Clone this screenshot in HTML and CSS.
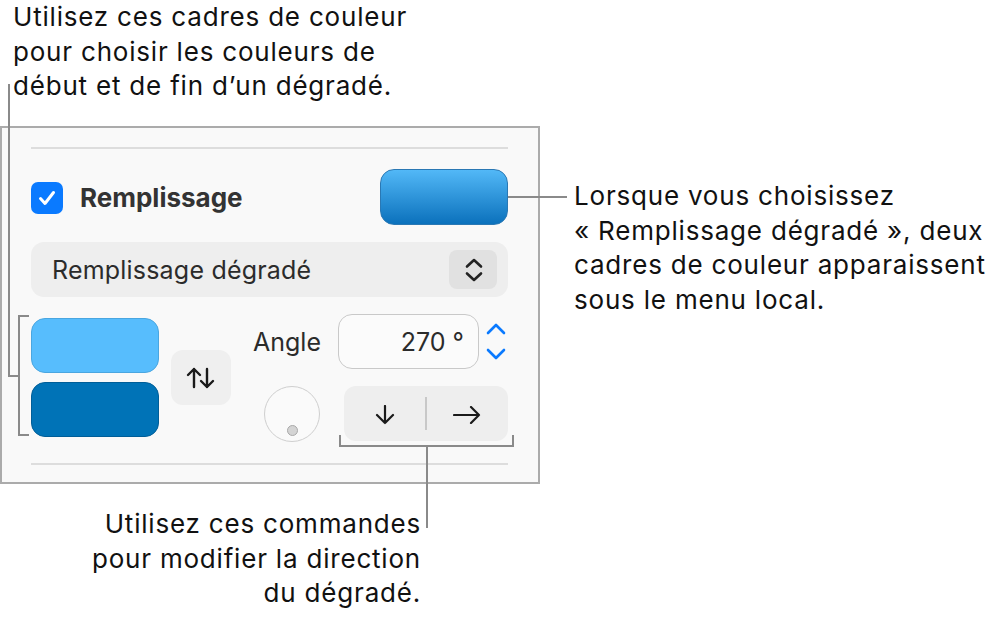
FILE: index.html
```html
<!DOCTYPE html>
<html lang="fr">
<head>
<meta charset="utf-8">
<link rel="stylesheet" href="styles.css">
</head>
<body>
<div class="canvas">
  <p class="note note-top">Utilisez ces cadres de couleur<br>pour choisir les couleurs de<br>début et de fin d’un dégradé.</p>
  <p class="note note-right">Lorsque vous choisissez<br>« Remplissage dégradé », deux<br>cadres de couleur apparaissent<br>sous le menu local.</p>
  <p class="note note-bottom">Utilisez ces commandes<br>pour modifier la direction<br>du dégradé.</p>

  <div class="panel">
    <div class="sep"></div>
    <div class="row-fill">
      <div class="fill-label">
        <span class="checkbox">
          <svg width="32" height="32" viewBox="0 0 32 32"><path d="M9.5 16.5 L14 21.5 L22.5 10.5" fill="none" stroke="#fff" stroke-width="3" stroke-linecap="round" stroke-linejoin="round"/></svg>
        </span>
        <span class="fill-title">Remplissage</span>
      </div>
      <div class="well"></div>
    </div>
    <div class="popup">
      <span class="popup-text">Remplissage dégradé</span>
      <span class="popup-btn">
        <svg width="20" height="26" viewBox="0 0 20 26"><path d="M3 9.5 L10 3 L17 9.5 M3 16.5 L10 23 L17 16.5" fill="none" stroke="#222" stroke-width="2.6" stroke-linecap="round" stroke-linejoin="round"/></svg>
      </span>
    </div>
    <div class="row-grad">
      <div class="swatches">
        <div class="swatch swatch-light"></div>
        <div class="swatch swatch-dark"></div>
      </div>
      <div class="swap">
        <svg width="32" height="22" viewBox="0 0 32 22"><path d="M9 20 V2 M3 8 L9 2 L15 8 M22 2 V20 M16 14 L22 20 L28 14" fill="none" stroke="#1a1a1a" stroke-width="2.4" stroke-linecap="round" stroke-linejoin="round"/></svg>
      </div>
      <div class="angle-block">
        <div class="angle-row">
          <span class="angle-label">Angle</span>
          <span class="angle-field">270 °</span>
          <span class="stepper">
            <svg width="20" height="38" viewBox="0 0 20 38"><path d="M2 10 L10 2 L18 10 M2 27 L10 35 L18 27" fill="none" stroke="#0a7aff" stroke-width="2.6" stroke-linecap="round" stroke-linejoin="round"/></svg>
          </span>
        </div>
        <div class="dir-row">
          <div class="dial"><span class="dial-dot"></span></div>
          <div class="direction">
            <span class="dir-btn">
              <svg width="22" height="20" viewBox="0 0 22 20"><path d="M11 1 V18 M3 10 L11 18 L19 10" fill="none" stroke="#1a1a1a" stroke-width="2.2" stroke-linecap="round" stroke-linejoin="round"/></svg>
            </span>
            <span class="dir-divider"></span>
            <span class="dir-btn">
              <svg width="28" height="18" viewBox="0 0 28 18"><path d="M1 9 H26 M18 1 L26 9 L18 17" fill="none" stroke="#1a1a1a" stroke-width="2.2" stroke-linecap="round" stroke-linejoin="round"/></svg>
            </span>
          </div>
        </div>
      </div>
    </div>
    <div class="sep sep-bottom"></div>
  </div>

  <svg class="leaders" width="996" height="622" viewBox="0 0 996 622">
    <g fill="none" stroke="#8a8a8a" stroke-width="2">
      <path d="M9 84 V376 H19"/>
      <path d="M29 316 H19 V435 H29"/>
      <path d="M508 197 H567"/>
      <path d="M340 435 V446 H513 V435"/>
      <path d="M427 446 V528"/>
    </g>
  </svg>
</div>
</body>
</html>
```

FILE: styles.css
```css
* { box-sizing: border-box; }
html, body { margin: 0; padding: 0; background: #ffffff; }
body { font-family: "Inter", "Noto Sans", sans-serif; color: #1a1a1a; }

.canvas { position: relative; width: 996px; height: 622px; overflow: hidden; }

.note {
  position: absolute;
  margin: 0;
  font-size: 26px;
  letter-spacing: 0.8px;
  line-height: 34.7px;
  color: #111111;
  white-space: nowrap;
}
.note-top { left: 13px; top: 0; }
.note-right { left: 574px; top: 179px; }
.note-bottom { right: 575px; top: 507px; text-align: right; }

.leaders { position: absolute; left: 0; top: 0; pointer-events: none; }

.panel {
  position: absolute;
  left: 0;
  top: 126px;
  width: 540px;
  height: 358px;
  border: 2px solid #ababab;
  background: #f9f9f9;
  padding: 19px 30px 0 29px;
}
.sep { height: 2px; background: #dddddd; }
.sep-bottom { margin-top: 22px; }

.row-fill {
  margin-top: 20px;
  height: 56px;
  display: flex;
  align-items: center;
  justify-content: space-between;
}
.fill-label { display: flex; align-items: center; gap: 17px; margin-top: 1px; }
.checkbox {
  width: 32px; height: 32px;
  border-radius: 7px;
  background: #0a7aff;
  display: flex;
}
.fill-title { font-size: 26px; font-weight: 700; color: #333333; }
.well {
  width: 128px; height: 56px;
  border-radius: 14px;
  background: linear-gradient(#52b8f7, #0b71bc);
  border: 1px solid #2a78b4;
}

.popup {
  margin-top: 17px;
  height: 55px;
  border-radius: 13px;
  background: #eeeeee;
  display: flex;
  align-items: center;
  justify-content: space-between;
  padding: 0 11px 0 21px;
}
.popup-text { font-size: 25px; letter-spacing: 0.2px; color: #2b2b2b; }
.popup-btn {
  width: 48px; height: 39px;
  border-radius: 8px;
  background: #e1e1e1;
  display: flex; align-items: center; justify-content: center;
  padding-left: 2px;
}

.row-grad { margin-top: 17px; display: flex; align-items: center; height: 127px; }
.swatches { display: flex; flex-direction: column; gap: 9px; width: 128px; }
.swatch { height: 55px; border-radius: 14px; }
.swatch-light { background: #57bdfd; border: 1px solid #4aa6e0; }
.swatch-dark { background: #0073b7; border: 1px solid #005e98; }

.swap {
  margin-left: 12px;
  width: 60px; height: 55px;
  border-radius: 12px;
  background: #efefef;
  display: flex; align-items: center; justify-content: center;
}

.angle-block { margin-left: 22px; display: flex; flex-direction: column; gap: 17px; }
.angle-row { display: flex; align-items: center; height: 55px; }
.angle-label { width: 85px; font-size: 25px; color: #2b2b2b; }
.angle-field {
  width: 141px; height: 55px;
  border: 1.5px solid #c9c9c9;
  border-radius: 14px;
  background: #fbfbfb;
  font-size: 25px;
  color: #2b2b2b;
  display: flex; align-items: center; justify-content: flex-end;
  padding-right: 14px;
}
.stepper { margin-left: 7px; display: flex; }

.dir-row { display: flex; align-items: center; height: 55px; }
.dial {
  margin-left: 11px;
  width: 56px; height: 56px;
  border-radius: 50%;
  border: 1.5px solid #cfcfcf;
  background: #fafafa;
  display: flex; justify-content: center; align-items: flex-end;
  padding-bottom: 5px;
}
.dial-dot {
  width: 11px; height: 11px;
  border-radius: 50%;
  background: #d4d4d4;
  border: 1.5px solid #a9a9a9;
}
.direction {
  margin-left: 24px;
  width: 164px; height: 55px;
  border-radius: 12px;
  background: #eeeeee;
  display: flex; align-items: center;
}
.dir-btn { flex: 1; display: flex; justify-content: center; align-items: center; padding-top: 3px; }
.dir-divider { width: 1.5px; height: 33px; background: #c8c8c8; }
```
